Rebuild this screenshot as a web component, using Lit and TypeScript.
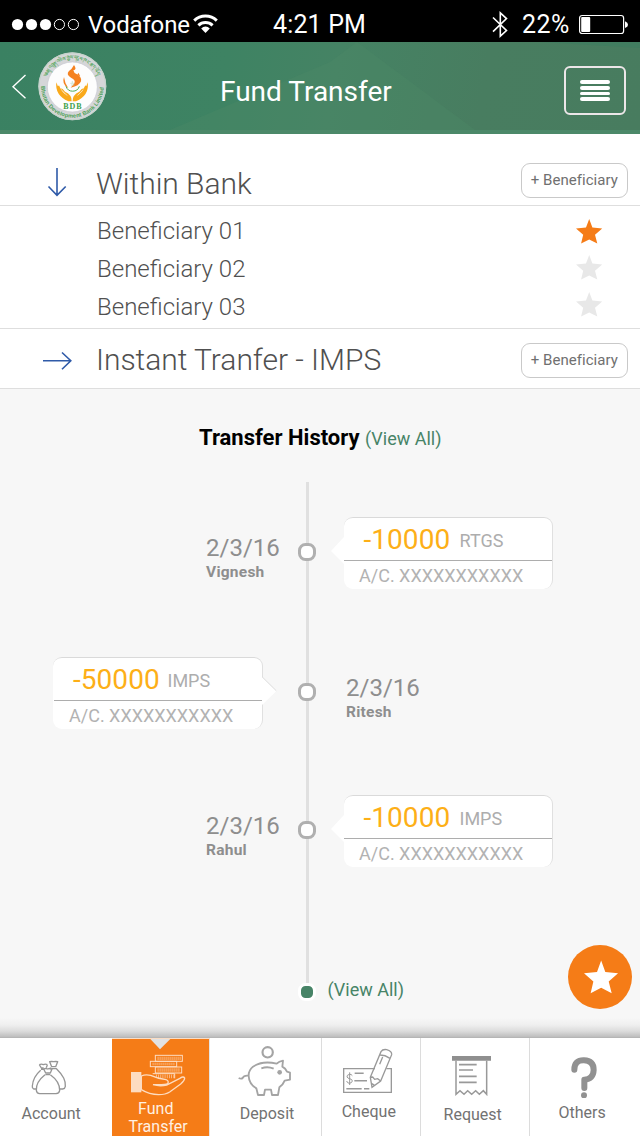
import { LitElement, html, css, svg } from "lit";
import { customElement, property } from "lit/decorators.js";
import { classMap } from "lit/directives/class-map.js";

const STAR = "M13.2 0 L16.4 8.6 L26.2 9.6 L19 15.8 L21.3 24.6 L13.2 20.4 L5.1 24.6 L7.2 15.8 L0 9.6 L10 8.6 Z";

interface Transfer {
  date: string;
  name: string;
  amount: string;
  kind: string;
  side: "left" | "right";
}

const TRANSFERS: Transfer[] = [
  { date: "2/3/16", name: "Vignesh", amount: "-10000", kind: "RTGS", side: "right" },
  { date: "2/3/16", name: "Ritesh", amount: "-50000", kind: "IMPS", side: "left" },
  { date: "2/3/16", name: "Rahul", amount: "-10000", kind: "IMPS", side: "right" },
];

@customElement("status-bar")
class StatusBar extends LitElement {
  static styles = css`
    :host { display: flex; height: 42px; background: #000; color: #fff; font: 400 24px/30px Roboto, sans-serif; padding-top: 10px; box-sizing: border-box; white-space: nowrap; }
    svg { display: block; flex: none; }
    .dots { margin: 0 6px 0 10px; }
    .carrier { width: 104px; letter-spacing: -0.15px; }
    .time { width: 100px; margin-left: 55px; font-size: 25px; letter-spacing: 0.15px; }
    .bt { margin-left: 118px; }
    .pct { width: 50px; margin-left: 13px; font-size: 25px; letter-spacing: 0.5px; }
    .battery { margin-left: 6px; }
  `;
  render() {
    return html`
      <svg class="dots" width="72" height="30" viewBox="0 0 72 30">
        ${[7.5, 21.5, 35.5].map((x) => svg`<circle cx=${x} cy="14.5" r="5.6" fill="#fff"/>`)}
        ${[49.4, 63.4].map((x) => svg`<circle cx=${x} cy="14.5" r="5.1" fill="none" stroke="#fff"/>`)}
      </svg>
      <div class="carrier">Vodafone</div>
      <svg width="26" height="30" viewBox="0 0 26 30" fill="none" stroke="#fff" stroke-width="3">
        <path d="M2.2 10.6 A16.5 16.5 0 0 1 24.8 10.6"/>
        <path d="M6.4 15.3 A10.5 10.5 0 0 1 20.6 15.3"/>
        <path d="M9.2 18.4 A6 6 0 0 1 17.8 18.4 L13.5 23 Z" fill="#fff" stroke="none"/>
      </svg>
      <div class="time">4:21 PM</div>
      <svg class="bt" width="18" height="30" viewBox="0 0 18 30" fill="none" stroke="#fff" stroke-width="1.6">
        <path d="M2 7.5 L15.5 20.5 L9.3 26.2 V2.8 L15.5 8.6 L2 21.6"/>
      </svg>
      <div class="pct">22%</div>
      <svg class="battery" width="52" height="30" viewBox="0 0 52 30">
        <rect x="1.6" y="5.5" width="44" height="18" rx="2.5" fill="none" stroke="#fff" stroke-width="1.2"/>
        <rect x="3.2" y="7" width="9" height="15" rx="1" fill="#fff"/>
        <path d="M47 11.3 Q50 12.5 50 14.7 Q50 17 47 18 Z" fill="#fff"/>
      </svg>
    `;
  }
}

@customElement("bank-logo")
class BankLogo extends LitElement {
  static styles = css`
    :host { display: block; width: 70px; height: 70px; }
    svg { display: block; }
    .ring { font: 700 17px "Liberation Sans", sans-serif; fill: #4fa258; }
    .script { font: 700 15px "Noto Sans", "DejaVu Sans", sans-serif; fill: #5aa862; }
    .bdb { font: 700 24px "Liberation Serif", serif; fill: #3fa04a; }
  `;
  render() {
    return html`
      <svg width="70" height="70" viewBox="111 156 210 210">
        <defs>
          <path id="low" d="M123 259 A94 94 0 0 0 311 259"/>
          <path id="high" d="M141 232 A80 80 0 0 1 293 232"/>
        </defs>
        <circle cx="217" cy="259" r="102" fill="#d5d6d8"/>
        <circle cx="217" cy="259" r="100" fill="none" stroke="#c3d4ca" stroke-width="3"/>
        <circle cx="217" cy="261" r="75" fill="#fdfdfd" stroke="#c9c9d2" stroke-width="2"/>
        <text class="script"><textPath href="#high" textLength="196" lengthAdjust="spacingAndGlyphs">༄༅།། འབྲུག་འཕེལ་རྒྱས་དངུལ་ཁང་ཚད་ཡོད།</textPath></text>
        <text class="ring"><textPath href="#low" textLength="292" lengthAdjust="spacing">Bhutan Development Bank Limited</textPath></text>
        <path d="M222 195 Q216 207 207 213 Q197 224 213 233 Q228 240 223 250 Q218 257 212 263 Q238 258 243 244 Q246 232 231 223 Q221 219 220 211 Q232 209 222 195 Z M192 231 Q184 252 205 265 Q194 249 192 231 Z" fill="#f58220"/>
        <path d="M235 218 l6 11 l-9 -4 Z" fill="#f58220"/>
        <path d="M198 259 A21 21 0 0 0 238 259" fill="none" stroke="#4fae57" stroke-width="3"/>
        <path d="M211 250 h12 m-10 5 h10 m-6 -12 v6" stroke="#bddcc0" stroke-width="2"/>
        <path d="M169 247 Q164 286 205 304 H215 Q217 285 195 275 Q188 265 181 265 Q191 277 204 288 Q177 276 169 247 Z M263 247 Q269 286 228 304 H218 Q216 285 238 275 Q245 265 252 265 Q243 277 230 288 Q256 276 263 247 Z" fill="#f9a91a"/>
        <path d="M174 258 Q180 275 196 288 M259 258 Q253 275 238 288" fill="none" stroke="#f9a91a" stroke-width="7"/>
        <text class="bdb" x="190" y="328" textLength="55">BDB</text>
      </svg>
    `;
  }
}

@customElement("app-header")
class AppHeader extends LitElement {
  static styles = css`
    :host { display: block; height: 92px; position: relative; }
    .bar { display: flex; height: 88px; border-bottom: 4px solid #4c8969; background: linear-gradient(100deg, #3a8162 0%, #3e8363 35%, #458364 52%, #487d60 75%, #487c5f 100%); }
    .facets { position: absolute; left: 0; top: 0; }
    .back { margin: 32px 0 0 11px; position: relative; }
    bank-logo { margin: 10px 0 0 10px; position: relative; }
    .title { font: 400 28px/36px Roboto, sans-serif; color: #fff; margin: 32px 0 0 113px; width: 180px; white-space: nowrap; position: relative; }
    .menu { box-sizing: border-box; width: 62px; height: 49px; margin: 24px 0 0 164px; border: 2px solid #ece6e8; border-radius: 6px; display: flex; flex-direction: column; gap: 2px; padding: 12px 14px; position: relative; }
    .menu i { display: block; height: 4px; background: #fff; border-radius: 2px; }
  `;
  render() {
    return html`
      <div class="bar">
        <svg class="facets" width="640" height="88" viewBox="0 0 640 88">
          <path d="M357 0 L475 88 H170 L330 20 Z" fill="#4c8a67" opacity=".35"/>
          <path d="M540 0 H640 V6 Z" fill="#3a7c60" opacity=".5"/>
        </svg>
        <svg class="back" width="16" height="26" viewBox="0 0 16 26"><path d="M14.5 1 L2 12.7 L14.5 24.2" fill="none" stroke="#fff" stroke-width="1.4"/></svg>
        <bank-logo></bank-logo>
        <div class="title">Fund Transfer</div>
        <div class="menu"><i></i><i></i><i></i><i></i></div>
      </div>
    `;
  }
}

@customElement("transfer-group")
class TransferGroup extends LitElement {
  @property() label = "";
  @property({ type: Boolean, reflect: true }) open = false;
  static styles = css`
    :host { display: flex; height: 60px; box-sizing: border-box; border-bottom: 1px solid #dedede; background: #fff; }
    :host([open]) { height: 72px; }
    .arrow { margin: 14px 0 0 40px; flex: none; }
    .label { font: 300 30px/36px Roboto, sans-serif; color: #505050; width: 425.4px; margin: 12.5px 0 0 21px; white-space: nowrap; letter-spacing: -0.03px; }
    .add { box-sizing: border-box; width: 107px; height: 35px; border: 1px solid #c9c9c9; border-radius: 9px; margin: 14px 0 0 0; padding-left: 8.4px; font: 400 15px/32px Roboto, sans-serif; color: #707070; white-space: nowrap; letter-spacing: 0.04px; }
    :host([open]) .arrow { margin-top: 31px; }
    :host([open]) .label { margin-top: 31.5px; }
    :host([open]) .add { margin-top: 29px; }
  `;
  render() {
    return html`
      <svg class="arrow" width="35" height="36" viewBox="0 0 35 36" fill="none" stroke="#2f5aa8" stroke-width="1.6">
        ${this.open
          ? svg`<path d="M17 3 V30 M8.5 21.5 L17 30.3 L25.7 21.5"/>`
          : svg`<path d="M3 17.7 H30.5 M22 9.5 L30.8 17.7 L22 26.3"/>`}
      </svg>
      <div class="label">${this.label}</div>
      <div class="add">+ Beneficiary</div>
    `;
  }
}

@customElement("beneficiary-list")
class BeneficiaryList extends LitElement {
  static styles = css`
    :host { display: flex; height: 123px; box-sizing: border-box; border-bottom: 1px solid #dedede; background: #fff; }
    .names { width: 479px; padding: 6px 0 0 97px; font: 300 24px/38px Roboto, sans-serif; color: #505050; }
    .stars { display: flex; flex-direction: column; gap: 11.6px; padding-top: 12.5px; }
    svg { display: block; }
    path { fill: #e8e8e8; }
    .on path { fill: #f57c17; }
  `;
  render() {
    const rows = ["Beneficiary 01", "Beneficiary 02", "Beneficiary 03"];
    return html`
      <div class="names">${rows.map((r) => html`<div>${r}</div>`)}</div>
      <div class="stars">
        ${rows.map((_, i) => html`<svg class=${classMap({ on: i === 0 })} width="27" height="25" viewBox="0 0 27 25"><path d=${STAR}/></svg>`)}
      </div>
    `;
  }
}

@customElement("transfer-card")
class TransferCard extends LitElement {
  @property() amount = "";
  @property() kind = "";
  @property({ reflect: true }) side = "right";
  static styles = css`
    :host { display: block; position: relative; box-sizing: border-box; width: 209px; height: 72px; background: #fff; border-radius: 9px; border-top: 1px solid #dadada; border-right: 1px solid #e0e0e0; white-space: nowrap; font-family: Roboto, sans-serif; }
    :host([side="left"]) { width: 210px; }
    .top { display: flex; height: 42px; border-bottom: 1px solid #adadad; }
    :host([side="left"]) .top { margin-left: 1px; }
    .amount { font-size: 28px; line-height: 43px; color: #fdaf17; width: 96px; padding-left: 19.5px; letter-spacing: 0.05px; }
    :host([side="left"]) .amount { width: 94.5px; padding-left: 19px; }
    .kind { font-size: 18px; line-height: 46px; color: #adadad; }
    .account { font-size: 18px; line-height: 29px; color: #b2b2b2; padding-left: 15px; }
    :host([side="left"]) .account { padding-left: 16px; }
    .tip { position: absolute; top: 18px; left: -14px; }
    :host([side="left"]) .tip { left: 209px; }
  `;
  render() {
    return html`
      <svg class="tip" width="16" height="30" viewBox="0 0 16 30">
        ${this.side === "right"
          ? svg`<path d="M14 1 L1 15 L14 28 Z" fill="#fff"/>`
          : svg`<path d="M0 1 L14.5 15 L0 29 Z" fill="#fff"/><path d="M0.3 1 L14.3 14.8" stroke="#dcdcdc" fill="none"/>`}
      </svg>
      <div class="top"><div class="amount">${this.amount}</div><div class="kind">${this.kind}</div></div>
      <div class="account">A/C. XXXXXXXXXXX</div>
    `;
  }
}

@customElement("transfer-history")
class TransferHistory extends LitElement {
  static styles = css`
    :host { display: block; height: 648px; background: #f7f7f7; font-family: Roboto, sans-serif; white-space: nowrap; overflow: hidden; }
    .title { display: flex; align-items: baseline; height: 29px; padding: 34px 0 0 199px; line-height: 30px; }
    .title b { font-size: 22px; font-weight: 700; color: #000; width: 166px; }
    .all { font-size: 18px; color: #478467; }
    .timeline { margin-top: 30px; height: 522px; background: linear-gradient(#e0e0e0, #e0e0e0) 306px 0 / 3px 501px no-repeat; display: flex; flex-direction: column; }
    .row { display: grid; grid-template-columns: 298px 18px 1fr; height: 72px; margin-top: 35px; }
    .row + .row { margin-top: 68px; }
    .row + .row + .row { margin-top: 66px; }
    .node { box-sizing: border-box; width: 18px; height: 18px; border: 3.5px solid #b0b0b0; border-radius: 7.5px; background: #fff; margin-top: 26px; }
    .when { padding: 17px 0 0 206px; color: #8e8e8e; }
    .when.right { padding-left: 30px; }
    .date { font-size: 24px; line-height: 28px; }
    .name { font-size: 15.5px; line-height: 20px; font-weight: 700; letter-spacing: 0.25px; }
    .card-left { padding-left: 53px; }
    .card-right { padding-left: 28px; }
    .end { display: flex; height: 18px; margin: 116px 0 0 298px; }
    .dot { box-sizing: border-box; width: 18px; height: 18px; border: 3px solid #fff; border-radius: 7.5px; background: #478467; }
    .end .all { line-height: 18px; margin: -2.5px 0 0 11.5px; }
  `;
  render() {
    return html`
      <div class="title"><b>Transfer History</b><span class="all">(View All)</span></div>
      <div class="timeline">
        ${TRANSFERS.map((t) => {
          const card = html`<transfer-card .amount=${t.amount} .kind=${t.kind} side=${t.side}></transfer-card>`;
          const when = html`<div class="date">${t.date}</div><div class="name">${t.name}</div>`;
          return t.side === "right"
            ? html`<div class="row"><div class="when">${when}</div><div class="node"></div><div class="card-right">${card}</div></div>`
            : html`<div class="row"><div class="card-left">${card}</div><div class="node"></div><div class="when right">${when}</div></div>`;
        })}
        <div class="end"><div class="dot"></div><span class="all">(View All)</span></div>
      </div>
    `;
  }
}

const coinRow = (x: number, y: number, w: number, h = 18) => svg`
  <rect x=${x} y=${y} width=${w} height=${h} fill="none" stroke="#fddcc0" stroke-width="3"/>
  <path d="M${x + 7} ${y + h / 2} H${x + w - 5}" stroke="#fac194" stroke-width=${h - 8} stroke-dasharray="2.5 3.5"/>`;

@customElement("tab-bar")
class TabBar extends LitElement {
  static styles = css`
    :host { display: flex; height: 98px; background: #fff; color: #727272; font: 400 16px/20px Roboto, sans-serif; white-space: nowrap; }
    svg { display: block; }
    .tab { box-sizing: border-box; border-right: 1px solid #dcdcdc; height: 98px; }
    .label { letter-spacing: 0.02px; }
    .account { width: 112px; border: 0; }
    .account .label { margin: 7.5px 0 0 21.5px; }
    .fund { width: 98px; background: linear-gradient(#e4e4e4, #e4e4e4) 97px 0 / 1px 98px no-repeat, #f57c17; color: #fff0e2; border: 0; border-top: 1px solid #f9ddc6; }
    .fund .label { line-height: 18px; }
    .fund .first { margin: 2.5px 0 0 26px; }
    .fund .second { margin-left: 16.5px; }
    .deposit { width: 112px; }
    .deposit .label { margin: 7.5px 0 0 29.7px; }
    .cheque { width: 99px; }
    .cheque .label { margin: 6px 0 0 19.7px; }
    .request { width: 109px; }
    .request .label { margin: 8.5px 0 0 22.5px; }
    .others { width: 110px; border: 0; }
    .others .label { margin: 4.5px 0 0 28.5px; }
  `;
  render() {
    return html`
      <div class="tab account">
        <svg width="112" height="58" viewBox="0 36 336 174" fill="none" stroke="#969696" stroke-width="4" stroke-linejoin="round">
          <path d="M108 189 H101 Q96 187 97 180 Q99 153 122 133 M118 116 q6 -3 12 0 q6 -3 12 0 M118 116 l6 10 h7 M142 116 l-3 9 M123 130 h10"/>
          <path d="M149 107 q6 -1 12 0 q7 -1 12 0 l-6 15 h-12 Z M155 128 h13 M168 127 Q184 143 191 156 Q197 168 196 181 Q195 188 188 189 H180 M153 125 l-3 5"/>
          <path d="M131 129 q6 -3 12 0 q7 -3 13 0 l-5 12 h-14 Z M136 146 h14 M135 146 Q107 168 109 193 Q110 202 119 203 H168 Q178 202 179 193 Q180 167 151 146"/>
        </svg>
        <div class="label">Account</div>
      </div>
      <div class="tab fund">
        <svg width="97" height="58" viewBox="336 39 291 174">
          <path d="M450 38 H512 L480 70 Z" fill="#e2e2e2"/>
          ${coinRow(466, 88, 81)} ${coinRow(451, 106, 79, 16)} ${coinRow(466, 123, 79, 18)}
          <path d="M458 143 H524 V157" stroke="#fddcc0" stroke-width="3" fill="none"/>
          <path d="M468 151 h54" stroke="#fac194" stroke-width="11" stroke-dasharray="2.5 4"/>
          <path d="M424 150 Q436 144 452 148 Q474 158 498 161 Q508 165 503 173 Q497 177 459 176 Q480 182 500 177 L538 158 Q550 149 554 156 Q554 163 542 174 L509 198 Q497 206 476 206 Q448 206 424 191 Z" fill="#f57c17" stroke="#fddcc0" stroke-width="4"/>
          <rect x="393" y="138" width="31" height="61" fill="#fddcc0"/>
        </svg>
        <div class="label first">Fund</div>
        <div class="label second">Transfer</div>
      </div>
      <div class="tab deposit">
        <svg width="111" height="58" viewBox="0 36 333 174" fill="none" stroke="#a4a4a4" stroke-width="5.5" stroke-linejoin="round">
          <circle cx="173" cy="79" r="15.5" stroke-width="6.5"/>
          <path d="M200 113 Q157 103 129 122 Q115 134 116 150 Q117 174 139 187 L144 207 H162 L165 191 H183 L186 207 H204 L208 184 Q220 175 224 164 L240 161 V140 L231 137 Q227 127 217 122 L219 104 Q207 106 200 113 Z"/>
          <path d="M86 156 Q94 160 98 156 Q101 148 114 149 M154 127 Q173 120 191 128"/>
          <circle cx="209" cy="139" r="7" fill="#a4a4a4" stroke="none"/>
        </svg>
        <div class="label">Deposit</div>
      </div>
      <div class="tab cheque">
        <svg width="98" height="58" viewBox="336 36 294 174" fill="none" stroke="#999" stroke-width="4">
          <path d="M495 128 H401 V199 H544 V128 H529"/>
          <path d="M427 149 Q424 144 418 145 Q410 147 411 153 Q413 157 419 158 Q427 160 427 165 Q426 171 418 172 Q411 171 410 165 M419 139 V177" stroke-width="3"/>
          <path d="M434 142 H461 M433 164 H471 M409 188 H455 M462 188 H478" stroke-width="4.5"/>
          <path d="M481 154 L513 77 Q518 69 530 71 Q546 75 545 86 L512 165 L486 184 Z M481 154 l7 -1 l6 7 l9 -2 l9 7 M508 87 Q524 86 540 97 M518 93 l-9 22 M486 173 l7 5"/>
        </svg>
        <div class="label">Cheque</div>
      </div>
      <div class="tab request">
        <svg width="108" height="58" viewBox="3 36 324 174" fill="none" stroke="#999" stroke-width="4.5">
          <path d="M96 97 H213" stroke-width="14" stroke="#8f8f8f"/>
          <path d="M108 104 V205 L120 194 L132 205 L143 194 L155 205 L167 194 L178 205 L190 194 L200 205 V104"/>
          <path d="M117 116 H170 M117 132 H159 M117 151 H170 M117 169 H170" stroke-width="5"/>
        </svg>
        <div class="label">Request</div>
      </div>
      <div class="tab others">
        <svg width="110" height="60" viewBox="330 36 330 180" fill="none" stroke="#919191">
          <path d="M463 131 Q463 102 492 103 Q521 104 521 132 Q520 159 493 161 V186" stroke-width="18" stroke-linecap="round" stroke-linejoin="round"/>
          <circle cx="492" cy="208" r="9" fill="#919191" stroke="none"/>
        </svg>
        <div class="label">Others</div>
      </div>
    `;
  }
}

@customElement("app-root")
class AppRoot extends LitElement {
  static styles = css`
    :host { display: block; width: 640px; height: 1136px; position: relative; background: #f7f7f7; overflow: hidden; }
    .fab { position: absolute; left: 568px; top: 945px; width: 64px; height: 64px; border-radius: 50%; background: #f57c17; }
    .shade { position: absolute; left: 0; top: 1018px; width: 640px; height: 20px; background: linear-gradient(rgba(247,247,247,0) 0%, #efefef 35%, #dcdcdc 65%, #c0c0c0 92%, #b0b0b0 100%); }
    tab-bar { margin-top: 1px; }
  `;
  render() {
    return html`
      <status-bar></status-bar>
      <app-header></app-header>
      <transfer-group open label="Within Bank"></transfer-group>
      <beneficiary-list></beneficiary-list>
      <transfer-group label="Instant Tranfer - IMPS"></transfer-group>
      <transfer-history></transfer-history>
      <div class="shade"></div>
      <tab-bar></tab-bar>
      <svg class="fab" viewBox="0 0 64 64"><g transform="translate(16 15.5) scale(1.3 1.33)"><path fill="#fff" d=${STAR}/></g></svg>
    `;
  }
}
